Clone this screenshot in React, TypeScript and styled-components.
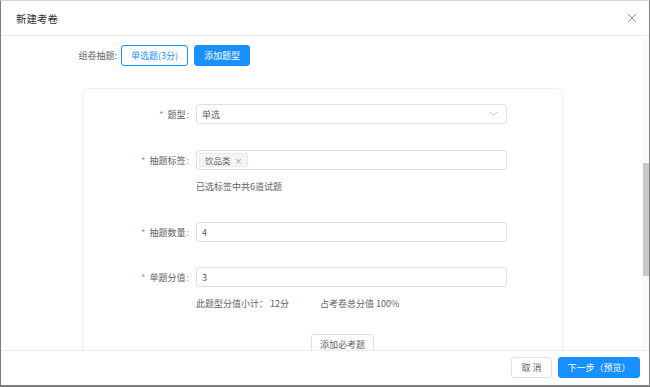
import React from 'react'
import styled, { createGlobalStyle, css } from 'styled-components'

const GlobalStyle = createGlobalStyle`
    html, body {
        margin: 0;
        padding: 0;
        background: #fff;
    }
    body {
        font-family: "Noto Sans CJK SC", "Noto Sans", sans-serif;
        color: #606266;
    }
`

const Frame = styled.div`
    width: 650px;
    height: 387px;
    box-sizing: border-box;
    display: flex;
    flex-direction: column;
    border-top: 1px solid #d6d6d6;
    border-left: 1px solid #7d7d7d;
    border-right: 1px solid #7d7d7d;
    border-bottom: 2px solid #7d7d7d;
    background: #fff;
    overflow: hidden;
`

const Header = styled.div`
    height: 34px;
    flex: none;
    display: flex;
    align-items: center;
    justify-content: space-between;
    padding: 0 12px 0 15px;
    border-bottom: 1px solid #ebebeb;
`

const Title = styled.span`
    font-size: 10.5px;
    color: #303133;
`

const Close = styled.span`
    display: flex;
    width: 10px;
    height: 10px;
`

const Body = styled.div`
    flex: 1;
    position: relative;
    overflow: hidden;
`

const Toolbar = styled.div`
    display: flex;
    align-items: center;
    gap: 6px;
    padding-top: 9px;
`

const ToolbarLabel = styled.span`
    width: 116px;
    margin-right: -2px;
    text-align: right;
    font-size: 9px;
    color: #606266;
`

const Button = styled.button<{ $variant?: 'primary' | 'outline' | 'default'; $w?: number }>`
    height: 21px;
    width: ${p => (p.$w ? `${p.$w}px` : 'auto')};
    box-sizing: border-box;
    display: inline-flex;
    align-items: center;
    justify-content: center;
    border-radius: 3px;
    font-family: inherit;
    font-size: 9px;
    padding: 0;
    white-space: nowrap;
    cursor: pointer;
    ${p =>
        p.$variant === 'primary'
            ? css`
                  background: #1890ff;
                  border: 1px solid #1890ff;
                  color: #fff;
              `
            : p.$variant === 'outline'
            ? css`
                  background: #fff;
                  border: 1px solid #1890ff;
                  color: #1890ff;
              `
            : css`
                  background: #fff;
                  border: 1px solid #dcdfe6;
                  color: #606266;
              `}
`

const Card = styled.div`
    margin: 22px 0 0 81px;
    width: 481px;
    height: 320px;
    box-sizing: border-box;
    border: 1px solid #ebeef5;
    border-radius: 6px;
    padding-top: 15px;
`

const FormItem = styled.div<{ $gap: number }>`
    display: grid;
    grid-template-columns: 108px 311px;
    column-gap: 5px;
    margin-bottom: ${p => p.$gap}px;
`

const FieldLabel = styled.label`
    height: 20px;
    display: flex;
    align-items: center;
    justify-content: flex-end;
    padding-right: 2px;
    font-size: 9px;
    color: #606266;
    &::before {
        content: '*';
        color: #f56c6c;
        margin-right: 4px;
    }
    &::after {
        content: ':';
        margin-left: 1px;
        color: #909399;
    }
`

const Field = styled.div`
    display: flex;
    flex-direction: column;
`

const InputBox = styled.div`
    height: 20px;
    box-sizing: border-box;
    border: 1px solid #dcdfe6;
    border-radius: 3px;
    display: flex;
    align-items: center;
    justify-content: space-between;
    padding: 0 8px 0 5px;
    font-size: 9px;
    color: #606266;
`

const TagBox = styled(InputBox)`
    padding-left: 2px;
    justify-content: flex-start;
`

const Tag = styled.span`
    height: 14px;
    box-sizing: border-box;
    display: inline-flex;
    align-items: center;
    gap: 4px;
    padding: 0 4px 0 5px;
    background: #f4f4f5;
    border: 1px solid #e9e9eb;
    border-radius: 2px;
    font-size: 8.5px;
    color: #606266;
`

const TagClose = styled.span`
    font-size: 8px;
    color: #909399;
`

const Hint = styled.div`
    display: flex;
    margin-top: 9px;
    height: 14px;
    align-items: center;
    font-size: 9px;
    color: #606266;
    white-space: nowrap;
`

const HintCol = styled.span<{ $w?: number }>`
    width: ${p => (p.$w ? `${p.$w}px` : 'auto')};
`

const AddRow = styled.div`
    display: flex;
    padding-left: 228px;
`

const Footer = styled.div`
    height: 32px;
    flex: none;
    display: flex;
    align-items: center;
    justify-content: flex-end;
    gap: 6px;
    padding: 0 9px 2px 0;
    border-top: 1px solid #ebebeb;
`

const Track = styled.div`
    position: absolute;
    top: 0;
    right: 0;
    bottom: 0;
    width: 7px;
    background: #fafafa;
`

const Thumb = styled.div`
    position: absolute;
    top: 127px;
    right: 0;
    width: 6px;
    height: 113px;
    background: #c8c8c8;
`

const Chevron = () => (
    <svg width="9" height="6" viewBox="0 0 9 6" fill="none">
        <path d="M1 1l3.5 3.5L8 1" stroke="#c0c4cc" strokeWidth="1" />
    </svg>
)

export default function App() {
    return (
        <>
            <GlobalStyle />
            <Frame>
                <Header>
                    <Title>新建考卷</Title>
                    <Close>
                        <svg width="10" height="10" viewBox="0 0 10 10">
                            <path d="M1 1l8 8M9 1l-8 8" stroke="#909399" strokeWidth="1" />
                        </svg>
                    </Close>
                </Header>
                <Body>
                    <Toolbar>
                        <ToolbarLabel>组卷抽题:</ToolbarLabel>
                        <Button $variant="outline" $w={67}>单选题(3分)</Button>
                        <Button $variant="primary" $w={56}>添加题型</Button>
                    </Toolbar>
                    <Card>
                        <FormItem $gap={26}>
                            <FieldLabel>题型</FieldLabel>
                            <Field>
                                <InputBox>
                                    <span>单选</span>
                                    <Chevron />
                                </InputBox>
                            </Field>
                        </FormItem>
                        <FormItem $gap={29}>
                            <FieldLabel>抽题标签</FieldLabel>
                            <Field>
                                <TagBox>
                                    <Tag>
                                        饮品类<TagClose>×</TagClose>
                                    </Tag>
                                </TagBox>
                                <Hint>已选标签中共6道试题</Hint>
                            </Field>
                        </FormItem>
                        <FormItem $gap={25}>
                            <FieldLabel>抽题数量</FieldLabel>
                            <Field>
                                <InputBox>4</InputBox>
                            </Field>
                        </FormItem>
                        <FormItem $gap={24}>
                            <FieldLabel>单题分值</FieldLabel>
                            <Field>
                                <InputBox>3</InputBox>
                                <Hint>
                                    <HintCol $w={124}>此题型分值小计：&nbsp;12分</HintCol>
                                    <HintCol>占考卷总分值 100%</HintCol>
                                </Hint>
                            </Field>
                        </FormItem>
                        <AddRow>
                            <Button $w={63}>添加必考题</Button>
                        </AddRow>
                    </Card>
                    <Track>
                        <Thumb />
                    </Track>
                </Body>
                <Footer>
                    <Button $w={41}>取&nbsp;消</Button>
                    <Button $variant="primary" $w={82}>下一步（预览）</Button>
                </Footer>
            </Frame>
        </>
    )
}
